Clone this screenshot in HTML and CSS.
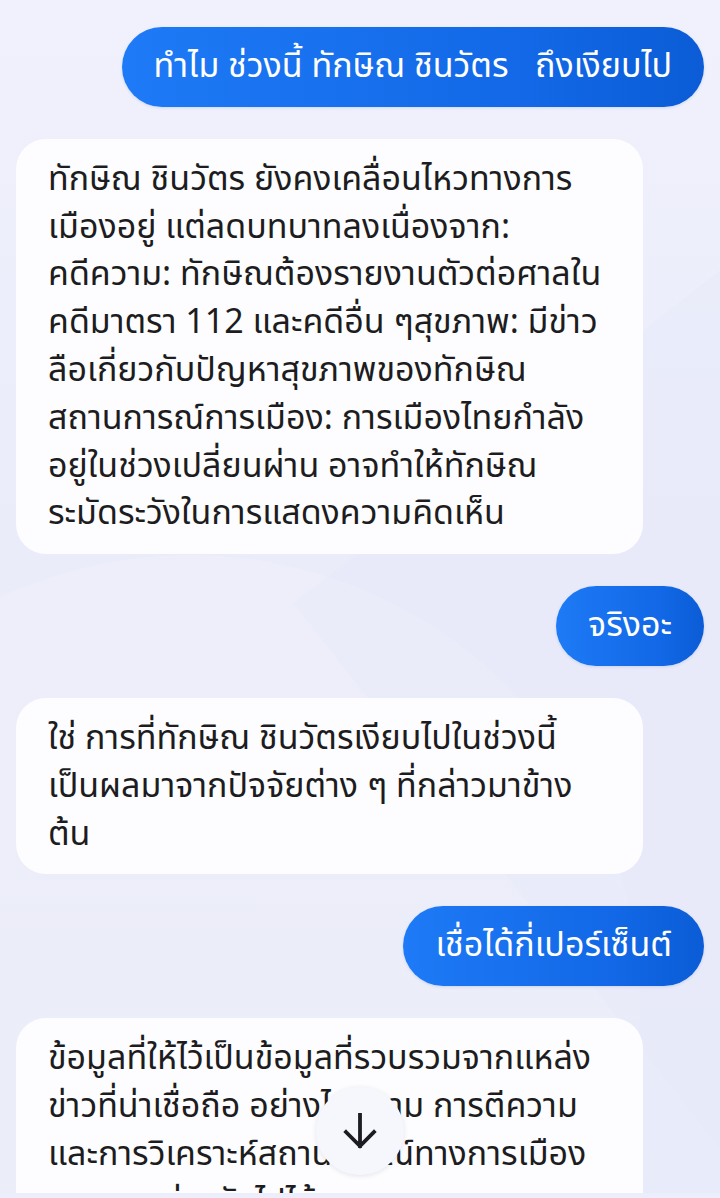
FILE: index.html
```html
<!DOCTYPE html>
<html lang="th">
<head>
<meta charset="utf-8">
<link rel="stylesheet" href="styles.css">
</head>
<body>
<div class="screen">
  <div class="bg-shape shape-a"></div>
  <div class="bg-shape shape-b"></div>
  <div class="chat">
    <div class="msg user">ทำไม ช่วงนี้ ทักษิณ ชินวัตร&nbsp;&nbsp; ถึงเงียบไป</div>
    <div class="msg bot">ทักษิณ ชินวัตร ยังคงเคลื่อนไหวทางการ<br>เมืองอยู่ แต่ลดบทบาทลงเนื่องจาก:<br>คดีความ: ทักษิณต้องรายงานตัวต่อศาลใน<br>คดีมาตรา 112 และคดีอื่น ๆสุขภาพ: มีข่าว<br>ลือเกี่ยวกับปัญหาสุขภาพของทักษิณ<br>สถานการณ์การเมือง: การเมืองไทยกำลัง<br>อยู่ในช่วงเปลี่ยนผ่าน อาจทำให้ทักษิณ<br>ระมัดระวังในการแสดงความคิดเห็น</div>
    <div class="msg user">จริงอะ</div>
    <div class="msg bot">ใช่ การที่ทักษิณ ชินวัตรเงียบไปในช่วงนี้<br>เป็นผลมาจากปัจจัยต่าง ๆ ที่กล่าวมาข้าง<br>ต้น</div>
    <div class="msg user">เชื่อได้กี่เปอร์เซ็นต์</div>
    <div class="msg bot">ข้อมูลที่ให้ไว้เป็นข้อมูลที่รวบรวมจากแหล่ง<br>ข่าวที่น่าเชื่อถือ อย่างไรก็ตาม การตีความ<br>และการวิเคราะห์สถานการณ์ทางการเมือง<br>อาจแตกต่างกันไปได้</div>
  </div>
  <button class="scroll-btn" aria-label="เลื่อนลง">
    <svg viewBox="0 0 24 24" width="48" height="48"><path d="M12 4v15.5M5 12.5l7 7 7-7" fill="none" stroke="#1c1c22" stroke-width="1.9" stroke-linecap="square"/></svg>
  </button>
</div>
</body>
</html>
```
FILE: styles.css
```css
html, body {
  margin: 0;
  padding: 0;
  background: #eceefb;
}
.screen {
  position: relative;
  width: 720px;
  height: 1193px;
  overflow: hidden;
  background: linear-gradient(180deg, #f0f1fc 0%, #eaecfa 45%, #e8ebf9 100%);
  font-family: "Noto Sans Thai", "Noto Sans", sans-serif;
}
.bg-shape {
  position: absolute;
  pointer-events: none;
}
.shape-a {
  left: -260px;
  top: 555px;
  width: 900px;
  height: 900px;
  border-radius: 50%;
  background: rgba(255, 255, 255, 0.14);
}
.shape-b {
  left: 620px;
  top: 250px;
  width: 700px;
  height: 1300px;
  transform: rotate(-38deg);
  background: rgba(230, 233, 250, 0.4);
}
.chat {
  position: relative;
  display: flex;
  flex-direction: column;
  gap: 32px;
  padding: 27px 16px 0 16px;
}
.msg {
  font-size: 34px;
  line-height: 47.8px;
  white-space: nowrap;
}
.user {
  align-self: flex-end;
  color: #ffffff;
  background: linear-gradient(90deg, #1e7af6 0%, #1268e6 70%, #0b5cd6 100%);
  border-radius: 40px;
  padding: 16px 32px;
  box-shadow: 0 1px 3px rgba(30, 80, 180, 0.15);
}
.bot {
  align-self: flex-start;
  width: 563px;
  color: #1d1d21;
  background: #fdfdff;
  border-radius: 30px;
  padding: 17px 32px 16px;
}
.scroll-btn {
  position: absolute;
  left: 316px;
  top: 1087px;
  width: 88px;
  height: 88px;
  border-radius: 50%;
  border: none;
  background: #f6f7fc;
  box-shadow: 0 1px 5px rgba(40, 50, 90, 0.12);
  display: flex;
  align-items: center;
  justify-content: center;
  padding: 0;
}
```
